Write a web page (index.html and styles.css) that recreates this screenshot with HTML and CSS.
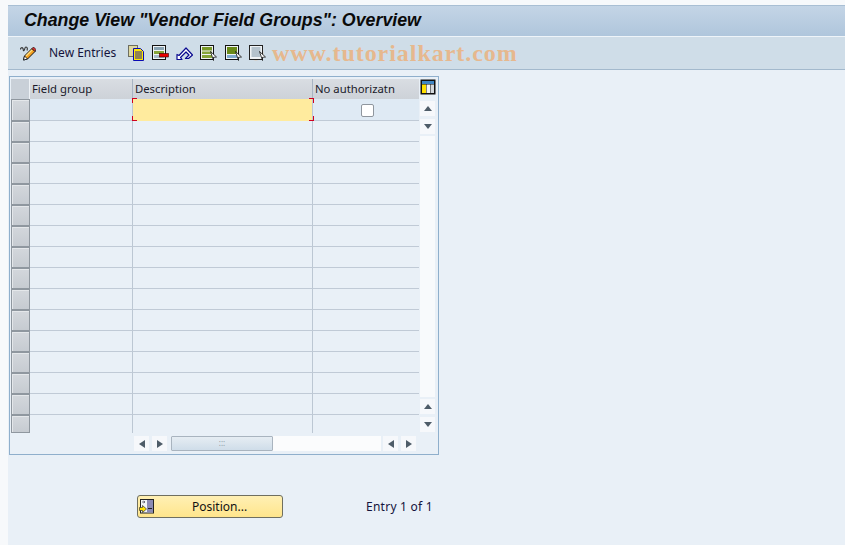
FILE: index.html
```html
<!DOCTYPE html>
<html lang="en">
<head>
<meta charset="utf-8">
<title>Change View</title>
<link rel="stylesheet" href="styles.css">
</head>
<body>
<div class="window">
  <header class="titlebar"><h1>Change View "Vendor Field Groups": Overview</h1></header>
  <nav class="toolbar">
    <svg class="ico pencil" viewBox="0 0 16 16"><path d="M.5 4.5c0-2 2-2.500 2.500-1s0 2.500 1 2 .5-3.500 2-3.500 1.500 2 1 3.500" fill="none" stroke="#333" stroke-width="1.1"/><path d="M3.500 15l1-4L12 3.500l3 3L7.500 14z" fill="#f4a020" stroke="#111"/><path d="M3.500 15l1-4 3 3z" fill="#fff" stroke="#111" stroke-width=".8"/><path d="M12 3.500l1.500-1.500 2.500 2.500-1 2z" fill="#e03030" stroke="#111" stroke-width=".7"/><path d="M6 11l6-6" stroke="#ffe080" stroke-width="1.200"/></svg>
    <span class="tool-label">New Entries</span>
    <svg class="ico copy" viewBox="0 0 16 16"><rect x=".5" y=".5" width="9" height="11" fill="#ded8a0" stroke="#6e6e60"/><path d="M5.500 3.500h7l3 3v9h-10z" fill="#ffe800" stroke="#0a0ab4"/><path d="M7 7h7M7 9h7M7 11h7M7 13h7" stroke="#0a0ab4" stroke-width=".9"/></svg>
    <svg class="ico del" viewBox="0 0 17 16"><rect x=".5" y=".5" width="13" height="14" fill="#f0f3f5" stroke="#111"/><rect x="2" y="2" width="10" height="3" fill="#8aa4b4"/><rect x="2" y="6" width="10" height="3" fill="#86a43a"/><rect x="2" y="10" width="10" height="3" fill="#a8bcc8"/><rect x="7.500" y="8.500" width="9" height="3.500" fill="#e80000" stroke="#300" stroke-width=".6"/></svg>
    <svg class="ico undo" viewBox="0 0 17 16"><path d="M1 9.500V14.500H6L4.500 12.500 10 7l3 3-3.500 3.500h3L16.500 10 10 3 3 10.500z" fill="#fff" stroke="#0a0a90" stroke-width="1.200" stroke-linejoin="round"/></svg>
    <svg class="ico sel" viewBox="0 0 17 16"><rect x=".5" y=".5" width="13" height="14" fill="#f0f3f5" stroke="#111"/><rect x="2" y="2" width="10" height="3.500" fill="#7a9a28"/><rect x="2" y="6.500" width="10" height="2.500" fill="#86a43a"/><rect x="2" y="10" width="10" height="3" fill="#86a43a"/><path d="M10.500 6.500l6 5.500-3 .3 0 3.200z" fill="#fff" stroke="#111" stroke-width=".8"/></svg>
    <svg class="ico sel sel-wide" viewBox="0 0 17 16"><rect x=".5" y=".5" width="13" height="14" fill="#f0f3f5" stroke="#111"/><rect x="2" y="2" width="10" height="7" fill="#6a8a18"/><rect x="2" y="10" width="10" height="3" fill="#80aacc"/><path d="M10.500 6.500l6 5.500-3 .3 0 3.200z" fill="#fff" stroke="#111" stroke-width=".8"/></svg>
    <svg class="ico sel sel-last" viewBox="0 0 17 16"><circle cx="7" cy="8" r="7.500" fill="#e6c4a0" opacity=".7"/><rect x=".5" y=".5" width="13" height="14" fill="#f0f3f5" stroke="#222"/><path d="M2.500 3h9M2.500 5h9M2.500 7h9M2.500 9h9M2.500 11h9" stroke="#7a92a4"/><path d="M10.500 6.500l6 5.500-3 .3 0 3.200z" fill="#fff" stroke="#111" stroke-width=".8"/></svg>
    <span class="watermark">www.tutorialkart.com</span>
  </nav>
  <main class="content">
    <section class="table-box">
      <div class="grid">
        <div class="head-row">
          <div class="corner"></div>
          <div class="hcell c1">Field group</div>
          <div class="hcell c2">Description</div>
          <div class="hcell c3">No authorizatn</div>
        </div>
        <div class="row active"><div class="sel-cell"></div><div class="cell c1"></div><div class="cell c2 input"><i class="mark tl"></i><i class="mark bl"></i><i class="mark tr"></i><i class="mark br"></i></div><div class="cell c3 center"><span class="checkbox"></span></div></div>
        <div class="row"><div class="sel-cell"></div><div class="cell c1"></div><div class="cell c2"></div><div class="cell c3"></div></div>
        <div class="row"><div class="sel-cell"></div><div class="cell c1"></div><div class="cell c2"></div><div class="cell c3"></div></div>
        <div class="row"><div class="sel-cell"></div><div class="cell c1"></div><div class="cell c2"></div><div class="cell c3"></div></div>
        <div class="row"><div class="sel-cell"></div><div class="cell c1"></div><div class="cell c2"></div><div class="cell c3"></div></div>
        <div class="row"><div class="sel-cell"></div><div class="cell c1"></div><div class="cell c2"></div><div class="cell c3"></div></div>
        <div class="row"><div class="sel-cell"></div><div class="cell c1"></div><div class="cell c2"></div><div class="cell c3"></div></div>
        <div class="row"><div class="sel-cell"></div><div class="cell c1"></div><div class="cell c2"></div><div class="cell c3"></div></div>
        <div class="row"><div class="sel-cell"></div><div class="cell c1"></div><div class="cell c2"></div><div class="cell c3"></div></div>
        <div class="row"><div class="sel-cell"></div><div class="cell c1"></div><div class="cell c2"></div><div class="cell c3"></div></div>
        <div class="row"><div class="sel-cell"></div><div class="cell c1"></div><div class="cell c2"></div><div class="cell c3"></div></div>
        <div class="row"><div class="sel-cell"></div><div class="cell c1"></div><div class="cell c2"></div><div class="cell c3"></div></div>
        <div class="row"><div class="sel-cell"></div><div class="cell c1"></div><div class="cell c2"></div><div class="cell c3"></div></div>
        <div class="row"><div class="sel-cell"></div><div class="cell c1"></div><div class="cell c2"></div><div class="cell c3"></div></div>
        <div class="row"><div class="sel-cell"></div><div class="cell c1"></div><div class="cell c2"></div><div class="cell c3"></div></div>
        <div class="row last"><div class="sel-cell"></div><div class="cell c1"></div><div class="cell c2"></div><div class="cell c3"></div></div>
        <div class="hscroll">
          <span class="sbtn"><i class="tri left"></i></span>
          <span class="sbtn"><i class="tri right"></i></span>
          <div class="htrack"><div class="thumb">:::</div></div>
          <span class="sbtn"><i class="tri left"></i></span>
          <span class="sbtn"><i class="tri right"></i></span>
        </div>
      </div>
      <aside class="vscroll">
        <svg class="config" viewBox="0 0 16 16"><rect x=".5" y=".5" width="15" height="15" fill="#111"/><rect x="2" y="2" width="12" height="3" fill="#3f86c4"/><rect x="2" y="5.500" width="4" height="8.500" fill="#ffe000"/><rect x="6.500" y="5.500" width="3.500" height="8.500" fill="#f4f4f4"/><rect x="10.500" y="5.500" width="3.500" height="8.500" fill="#d4d8dc"/></svg>
        <span class="sbtn first"><i class="tri up"></i></span>
        <span class="sbtn"><i class="tri down"></i></span>
        <div class="vtrack"></div>
        <span class="sbtn"><i class="tri up"></i></span>
        <span class="sbtn"><i class="tri down"></i></span>
      </aside>
    </section>
    <div class="actions">
      <button class="position" type="button">
        <svg class="pos-ico" viewBox="0 0 15 15"><rect x="1.500" y=".5" width="13" height="13.500" fill="#f0f4f8" stroke="#222"/><rect x="8" y="1" width="6" height="12.500" fill="#8a8ab4"/><path d="M9 9.500h4" stroke="#222"/><path d="M3 3h3M4.500 2l1.500 1-1.500 1" fill="none" stroke="#445" stroke-width=".7"/><path d="M.5 8.500h3V6.500l4 3.500-4 3.500v-2h-3z" fill="#ffe000" stroke="#333" stroke-width=".7"/></svg>
        <span>Position...</span>
      </button>
      <span class="entry">Entry 1 of 1</span>
    </div>
  </main>
</div>
</body>
</html>
```

FILE: styles.css
```css
* { box-sizing: border-box; }
html, body { margin: 0; height: 100%; }
body {
  width: 845px;
  height: 545px;
  overflow: hidden;
  background: #f7f9fb;
  padding: 5px 0 0 8px;
  font-family: "Noto Sans", "Open Sans", sans-serif;
  font-size: 12px;
  color: #111;
}
.window { display: flex; flex-direction: column; height: 540px; background: #e9f0f7; }
.titlebar {
  height: 32px;
  background: linear-gradient(#c4d5e6, #afc6dc);
  border-top: 1px solid #a9bfd4;
  border-bottom: 1px solid #eef4f9;
  padding: 0 0 2px 16px;
  display: flex;
  align-items: center;
}
.titlebar h1 {
  margin: 0;
  font: italic bold 17.8px "Liberation Sans", Arial, sans-serif;
  color: #0a0a0a;
}
.toolbar {
  height: 33px;
  background: #cfdde8;
  border-bottom: 1px solid #a3b9cd;
  display: flex;
  align-items: center;
  padding-left: 12px;
}
.ico { width: 17px; height: 16px; flex: none; margin-right: 7px; }
.pencil { width: 16px; margin-right: 13px; }
.tool-label { width: 68px; margin-right: 11px; color: #14143c; line-height: 16px; }
.copy { width: 16px; margin-right: 8px; }
.sel { margin-right: 8px; }
.sel-wide { margin-right: 7px; }
.sel-last { margin-right: 6px; }
.watermark {
  font: bold 24px "Liberation Serif", serif;
  color: #e6b88e;
  letter-spacing: .95px;
}
.content { flex: 1; padding: 6px 0 0 1px; }
.table-box {
  width: 430px;
  height: 379px;
  border: 1px solid #8fafcc;
  padding: 2px 0 0 1px;
  display: flex;
}
.grid { width: 408px; }
.head-row { display: flex; height: 20px; font-size: 11.3px; }
.corner { width: 19px; height: 20px; background: #c9d0d8; border-right: 1px solid #eef2f6; }
.hcell {
  height: 20px;
  background: linear-gradient(#d9dde2, #cdd2d8);
  border-right: 1px solid #a8b4c2;
  padding-left: 2px;
  line-height: 20px;
  color: #1a1a2a;
  white-space: nowrap;
}
.c1 { width: 103px; }
.c2 { width: 180px; }
.c3 { width: 106px; }
.head-row .c3 { border-right: 0; }
.row { display: flex; height: 21px; }
.active { height: 22px; }
.last { height: 18px; }
.sel-cell {
  width: 19px;
  height: 100%;
  background: linear-gradient(#d3d7dc, #c6cbd1);
  border: 1px solid #8f979f;
  box-shadow: inset 1px 1px 0 #e4e7ea;
}
.cell { height: 100%; border-bottom: 1px solid #c0cad6; border-right: 1px solid #bcc7d3; }
.row .c3 { border-right: 0; }
.last .cell { border-bottom: 0; }
.active .cell { background: #dfeaf4; }
.active .input { background: #ffeb9e; position: relative; border-bottom-color: #ffeb9e; }
.center { display: flex; align-items: center; justify-content: center; padding: 2px 0 0 3px; }
.checkbox { width: 13px; height: 13px; background: #fff; border: 1px solid #8f969e; border-radius: 2px; }
.mark { position: absolute; width: 5px; height: 5px; border: 0 solid #d00020; }
.tl { left: -1px; top: -1px; border-width: 1px 0 0 1px; }
.bl { left: -1px; bottom: -1px; border-width: 0 0 1px 1px; }
.tr { right: -2px; top: -1px; border-width: 1px 1px 0 0; }
.br { right: -2px; bottom: -1px; border-width: 0 1px 1px 0; }
.hscroll { display: flex; gap: 3px; height: 15px; margin: 3px 0 0 123px; }
.sbtn {
  width: 15px;
  height: 15px;
  flex: none;
  background: #f6f8fb;
  display: flex;
  align-items: center;
  justify-content: center;
}
.tri { width: 0; height: 0; border: 0 solid transparent; }
.tri.left { border-width: 4px 6px 4px 0; border-right-color: #4e5c68; }
.tri.right { border-width: 4px 0 4px 6px; border-left-color: #4e5c68; }
.tri.up { border-width: 0 4px 5px; border-bottom-color: #4e5c68; }
.tri.down { border-width: 5px 4px 0; border-top-color: #4e5c68; }
.htrack { width: 210px; height: 15px; background: #fbfcfd; margin: 0 -1px 0 1px; }
.thumb {
  width: 102px;
  height: 15px;
  background: linear-gradient(#e6edf3, #cfdde9);
  border: 1px solid #a9b4bf;
  border-radius: 1px;
  font-size: 8px;
  line-height: 12px;
  text-align: center;
  color: #8b98a4;
}
.vscroll { width: 16px; margin-left: 1px; display: flex; flex-direction: column; gap: 3px; align-items: flex-start; }
.config { width: 16px; height: 16px; margin-bottom: 1px; flex: none; }
.vtrack { width: 15px; height: 261px; background: #f8fafc; flex: none; margin: -1px 0; }
.vscroll .first { margin-top: 2px; }
.actions { display: flex; align-items: center; height: 23px; margin: 40px 0 0 128px; }
.position {
  width: 146px;
  height: 23px;
  padding: 0;
  border: 1px solid #6f6f60;
  border-radius: 3px;
  background: linear-gradient(#fff0b4, #ffe58c);
  font: 12px "Noto Sans", "Open Sans", sans-serif;
  color: #111;
  display: flex;
  align-items: center;
}
.pos-ico { width: 15px; height: 15px; margin-left: 1px; flex: none; }
.position span { margin-left: 38px; }
.entry { margin-left: 83px; color: #14143c; letter-spacing: .25px; }
```
